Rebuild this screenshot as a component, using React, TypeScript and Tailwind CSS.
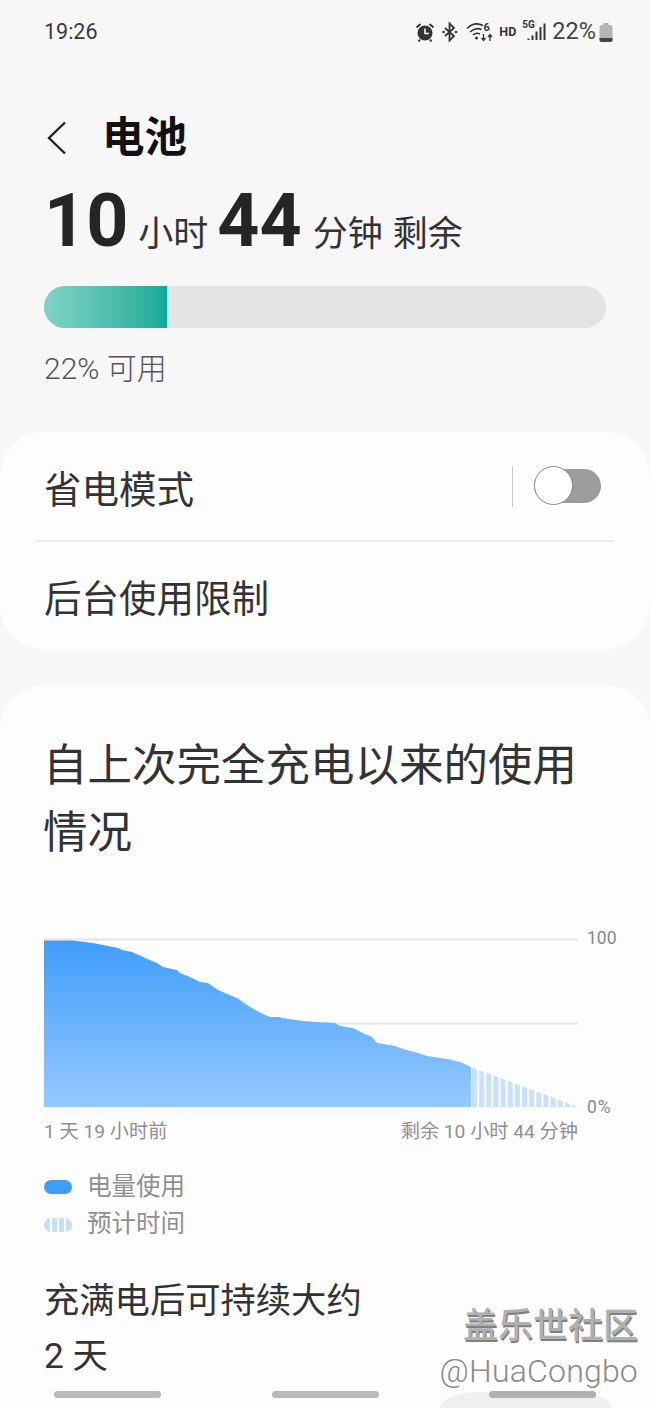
import React from "react";

const SANS = "font-['Roboto','Noto_Sans_CJK_SC',sans-serif]";

const usage: [number, number][] = [
  [43.5, 940.5],[73, 940.5],[93, 943],[118, 948],[122, 950],[132, 952],[145, 958],[157, 963],[163, 967],[177, 970],[180, 973],[190, 977],[200, 982],[208, 983],[218, 990],[237, 998],[250, 1007],[263, 1014],[270, 1017],[280, 1017],[282, 1018],[303, 1021],[320, 1022.3],[335, 1023],[340, 1026],[353, 1028],[363, 1033],[372, 1037],[377, 1043],[395, 1046],[403, 1049],[418, 1053],[427, 1056],[447, 1059],[460, 1062],[471, 1067],
];
const ox = 44;
const oy = 938;
const usagePts =
  usage.map(([x, y]) => `${x - ox},${y - oy}`).join(" ") + ` ${471 - ox},${1107 - oy} 0,${1107 - oy}`;
const stripes = Array.from({ length: 15 }, (_, i) => 472 - ox + i * 7.15);

function StatusIcons() {
  return (
    <div className="flex items-center text-[#333]">
      <svg width="20" height="20" viewBox="0 0 20 20">
        <circle cx="10" cy="11" r="7.5" fill="#333" />
        <path d="M10 6.5V11.5H14" stroke="#f7f7f7" strokeWidth="1.6" fill="none" />
        <path d="M1.5 5.5L5.5 2M18.5 5.5L14.5 2M5 17.5L3.5 19.5M15 17.5L16.5 19.5" stroke="#333" strokeWidth="2" fill="none" />
      </svg>
      <svg width="18" height="20" viewBox="0 0 18 20" className="ml-[6px]">
        <path d="M4 6L13 14L8.5 18.5V1.5L13 6L4 14" stroke="#333" strokeWidth="1.8" fill="none" />
        <circle cx="2.5" cy="10" r="1.3" fill="#333" />
        <circle cx="15" cy="10" r="1.3" fill="#333" />
      </svg>
      <svg width="28" height="22" viewBox="0 0 28 22" className="ml-[7px]">
        <path d="M1 7.5C6 2.5 12 2 17 4.5M4 11C8 7.5 12 7 15.5 8.5M7 14C9.5 12 12 12 14 13" stroke="#333" strokeWidth="1.6" fill="none" />
        <circle cx="10.5" cy="17" r="1.5" fill="#333" />
        <path d="M17.5 13V19M15.5 17L17.5 19.5L19.5 17M24 20V14M22 16L24 13.5L26 16" stroke="#333" strokeWidth="1.3" fill="none" />
        <text x="17.5" y="10" fontSize="11" fontWeight="700" fill="#333" fontFamily="Roboto">6</text>
      </svg>
      <span className="ml-[5px] w-[16px] text-[12.5px] font-bold leading-none">HD</span>
      <div className="relative ml-[7px] h-[22px] w-[24px]">
        <span className="absolute left-0 top-[-1px] text-[10px] font-bold leading-none">5G</span>
        <svg width="24" height="22" viewBox="0 0 24 22" className="absolute left-0 top-0">
          <path d="M6.5 17.5V19M10.5 14.5V19M14.5 10.5V19M18.5 6V19M22.5 2.5V19" stroke="#333" strokeWidth="2" />
        </svg>
      </div>
      <span className="ml-[6px] text-[23.5px] leading-none text-[#444]">22%</span>
      <svg width="14" height="19" viewBox="0 0 14 19" className="ml-[3px]">
        <rect x="4.5" y="0" width="5" height="2" fill="#aaa" />
        <rect x="0.5" y="2" width="13" height="17" rx="2" fill="#b5b5b5" />
        <path d="M0.5 15H13.5V17A2 2 0 0 1 11.5 19H2.5A2 2 0 0 1 0.5 17Z" fill="#444" />
      </svg>
    </div>
  );
}

export default function App() {
  return (
    <div className={`relative h-[1408px] w-[650px] overflow-hidden bg-[#f7f7f7] ${SANS}`}>
      <div className="flex h-[62px] items-center justify-between pl-[44px] pr-[37px] pt-[2px]">
        <span className="text-[21.5px] leading-none text-[#3a3a3a]">19:26</span>
        <StatusIcons />
      </div>

      <div className="mt-[51px] flex h-[50px] items-center pl-[47px]">
        <svg width="20" height="34" viewBox="0 0 20 34" fill="none">
          <path d="M18 1.5L2 17L18 32.5" stroke="#222" strokeWidth="2.4" />
        </svg>
        <h1 className="ml-[35px] text-[42.5px] font-bold leading-none text-[#111]">电池</h1>
      </div>

      <div className="mt-[17px] flex h-[82px] items-baseline pl-[44px] text-[#252525]">
        <span className="text-[73.5px] font-bold leading-[82px]">10</span>
        <span className="ml-[10px] text-[35px] font-normal text-[#333]">小时</span>
        <span className="ml-[9px] text-[73.5px] font-bold leading-[82px]">44</span>
        <span className="ml-[11px] text-[35px] font-normal text-[#333]">分钟</span>
        <span className="ml-[10px] text-[35px] font-normal text-[#333]">剩余</span>
      </div>

      <div className="mx-[44px] mt-[24px] h-[42px] overflow-hidden rounded-full bg-[#e4e4e4]">
        <div className="h-full w-[123px] bg-gradient-to-r from-[#7ed4c6] to-[#05ab97]" />
      </div>

      <p className="ml-[44px] mt-[21px] text-[30px] font-light leading-[40px] text-[#555]">22% 可用</p>

      <section className="mt-[43px] h-[217px] rounded-[44px] bg-[#fdfdfd] text-[#333]">
        <div className="flex h-[108px] items-center justify-between pl-[44px] pr-[49px]">
          <span className="pt-[9px] text-[37.5px] font-normal leading-none">省电模式</span>
          <div className="flex items-center">
            <div className="mr-[21px] h-[41px] w-px bg-[#c8c8c8]" />
            <div className="relative h-[34px] w-[67px] rounded-full bg-[#9c9c9c]">
              <div className="absolute left-0 top-[-3px] h-[39px] w-[39px] rounded-full border-[1.5px] border-[#8a8a8a] bg-white" />
            </div>
          </div>
        </div>
        <div className="mx-[36px] h-[2px] bg-[#ececec]" />
        <div className="flex h-[107px] items-center pl-[44px]">
          <span className="pt-[8px] text-[37.5px] font-normal leading-none">后台使用限制</span>
        </div>
      </section>

      <section className="mt-[36px] h-[800px] rounded-[44px] bg-[#fdfdfd] pl-[44px]">
        <h2 className="-ml-[1px] w-[560px] pt-[48px] text-[44.5px] font-normal leading-[67px] text-[#333]">
          自上次完全充电以来的使用情况
        </h2>

        <div className="mt-[71px] flex">
          <svg width="535" height="170" viewBox="0 0 535 170" className="shrink-0">
            <defs>
              <linearGradient id="fill" x1="0" y1="0" x2="0" y2="1">
                <stop offset="0" stopColor="#3f9dfb" />
                <stop offset="1" stopColor="#96c9fd" />
              </linearGradient>
              <clipPath id="proj">
                <polygon points={`${471 - ox},${1067 - oy} ${578 - ox},169 ${471 - ox},169`} />
              </clipPath>
            </defs>
            <line x1="0" y1="1.5" x2="534" y2="1.5" stroke="#e6e6e6" strokeWidth="2" />
            <line x1="0" y1="85.5" x2="534" y2="85.5" stroke="#e6e6e6" strokeWidth="2" />
            <polygon points={usagePts} fill="url(#fill)" />
            <g clipPath="url(#proj)">
              {stripes.map((x) => (
                <rect key={x} x={x} y="120" width="5" height="50" fill="#c9e1fb" />
              ))}
            </g>
          </svg>
          <div className="ml-[8px] flex h-[170px] flex-col justify-between text-[17.5px] font-normal leading-none text-[#888]">
            <span className="-mt-[8px]">100</span>
            <span className="-mb-[8px] tracking-[1px]">0%</span>
          </div>
        </div>

        <div className="mt-[10px] flex w-[534px] justify-between text-[19.2px] font-normal leading-[28px] text-[#8f8f8f]">
          <span>1 天 19 小时前</span>
          <span>剩余 10 小时 44 分钟</span>
        </div>

        <div className="mt-[22px] flex h-[38px] items-center">
          <div className="h-[14px] w-[28px] rounded-full bg-[#3f9dfb]" />
          <span className="ml-[15px] text-[24.5px] font-normal leading-none text-[#8f8f8f]">电量使用</span>
        </div>
        <div className="flex h-[37px] items-center">
          <div className="flex h-[14px] w-[28px] justify-between overflow-hidden rounded-full bg-[#fdfdfd]">
            <div className="w-[6px] bg-[#c5dffa]" />
            <div className="w-[5px] bg-[#c5dffa]" />
            <div className="w-[5px] bg-[#c5dffa]" />
            <div className="w-[6px] bg-[#c5dffa]" />
          </div>
          <span className="ml-[15px] text-[24.5px] font-normal leading-none text-[#8f8f8f]">预计时间</span>
        </div>

        <p className="mt-[31px] text-[35.3px] font-normal leading-[54px] text-[#333]">充满电后可持续大约</p>
        <p className="text-[35.3px] font-normal leading-[56px] text-[#333]">2 天</p>
      </section>

      <div className="absolute bottom-0 left-[440px] h-[16px] w-[172px] rounded-tl-[40px_16px] rounded-tr-[40px_16px] bg-[#efefef]" />
      <div className="absolute bottom-[10px] left-[54px] right-[54px] flex justify-between">
        <div className="h-[7px] w-[107px] rounded-sm bg-[#b9b9b9]" />
        <div className="h-[7px] w-[107px] rounded-sm bg-[#b9b9b9]" />
        <div className="h-[7px] w-[107px] rounded-sm bg-[#b0b0b0]" />
      </div>
      <div className="absolute bottom-[14px] right-[12px] flex flex-col items-end text-[#b0b0b0]">
        <span className="text-[35px] font-medium leading-[45px] [text-shadow:1px_2px_0_#808080]">盖乐世社区</span>
        <span className="text-[32px] font-light leading-[45px] tracking-[0.2px] text-[#8a8a8a]">@HuaCongbo</span>
      </div>
    </div>
  );
}
